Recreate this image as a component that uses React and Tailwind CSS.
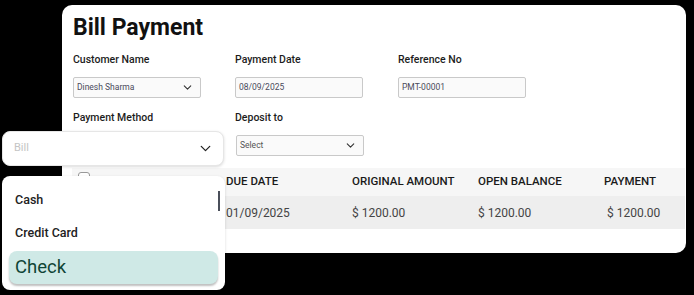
import { ChevronDown } from 'lucide-react';

const Label = ({ children }) => (
  <div className="text-[10.5px] font-medium text-[#1c1c1c] h-[16px] leading-[16px]">{children}</div>
);

const Field = ({ value, select, muted }) => (
  <div className="w-[128px] h-[21px] border border-[#c9c9c9] rounded-[2px] bg-[#fafafa] flex items-center justify-between pl-[3px] pr-[6px]">
    <span className={`text-[8.5px] ${muted ? 'text-[#555]' : 'text-[#4a4a5a]'}`}>{value}</span>
    {select && <ChevronDown className="w-[13px] h-[13px] text-[#333]" strokeWidth={2} />}
  </div>
);

const columns = ['DUE DATE', 'ORIGINAL AMOUNT', 'OPEN BALANCE', 'PAYMENT'];
const values = ['01/09/2025', '$ 1200.00', '$ 1200.00', '$ 1200.00'];

export default function App() {
  return (
    <div className="relative w-[694px] h-[295px] bg-black overflow-hidden" style={{ fontFamily: 'Roboto, "Liberation Sans", sans-serif' }}>
      <div className="ml-[62px] pt-[5px]">
        <div className="w-[624px] h-[248px] bg-white rounded-[10px] pt-[9px] overflow-hidden">
          <h1 className="pl-[11px] text-[23px] font-bold text-[#111] leading-[28px]">Bill Payment</h1>

          <div className="pl-[11px] mt-[10px] grid grid-cols-[162px_163px_163px]">
            <div>
              <Label>Customer Name</Label>
              <div className="mt-[9px]"><Field value="Dinesh Sharma" select /></div>
            </div>
            <div>
              <Label>Payment Date</Label>
              <div className="mt-[9px]"><Field value="08/09/2025" /></div>
            </div>
            <div>
              <Label>Reference No</Label>
              <div className="mt-[9px]"><Field value="PMT-00001" /></div>
            </div>
          </div>

          <div className="pl-[11px] mt-[12px] grid grid-cols-[162px_163px_163px]">
            <div>
              <Label>Payment Method</Label>
            </div>
            <div>
              <Label>Deposit to</Label>
              <div className="mt-[9px] ml-[1px]"><Field value="Select" select muted /></div>
            </div>
          </div>

          <div className="ml-[10px] mr-[1px] mt-[12px]">
            <div className="h-[28px] bg-[#f6f6f6] flex items-center">
              <div className="w-[28px] shrink-0 pl-[6px] -mt-[8px]">
                <div className="w-[12px] h-[12px] border border-[#999] rounded-[3px] bg-white" />
              </div>
              <div className="w-[126px] shrink-0" />
              {columns.map((c) => (
                <div key={c} className="w-[126px] shrink-0 text-[11.5px] font-medium text-[#1a1a1a]">{c}</div>
              ))}
            </div>
            <div className="h-[33px] bg-[#eeeeee] flex items-center">
              <div className="w-[154px] shrink-0" />
              {values.map((v, i) => (
                <div key={i} className={`w-[126px] shrink-0 text-[12px] text-[#444] ${i === 3 ? 'pl-[3px]' : ''}`}>{v}</div>
              ))}
            </div>
          </div>
        </div>
      </div>

      <div className="absolute left-[2px] top-[131px] w-[222px] h-[35px] bg-white rounded-[8px] border border-[#e6e6e6] shadow-[0_1px_3px_rgba(0,0,0,0.15)] flex items-center justify-between pl-[11px] pr-[9px]">
        <span className="text-[11px] text-[#c4c4c4]">Bill</span>
        <ChevronDown className="w-[17px] h-[17px] text-[#222]" strokeWidth={1.8} />
      </div>

      <div className="absolute left-[2px] top-[176px] w-[223px] h-[114px] bg-white rounded-[8px] shadow-[0_1px_3px_rgba(0,0,0,0.15)] pt-[12px]">
        <div className="absolute left-[216px] top-[15px] w-[2px] h-[20px] bg-[#4a4f5a]" />
        <div className="pl-[13px] h-[24px] leading-[24px] text-[12.5px] font-medium text-[#222]">Cash</div>
        <div className="pl-[13px] mt-[9px] h-[24px] leading-[24px] text-[12.5px] font-medium text-[#222]">Credit Card</div>
        <div className="ml-[7px] mt-[6px] w-[209px] h-[33px] rounded-[8px] bg-[#cfe9e6] shadow-[0_2px_2px_rgba(0,0,0,0.25)] flex items-center pl-[6px] text-[18.5px] text-[#0f4536]">
          Check
        </div>
      </div>
    </div>
  );
}
